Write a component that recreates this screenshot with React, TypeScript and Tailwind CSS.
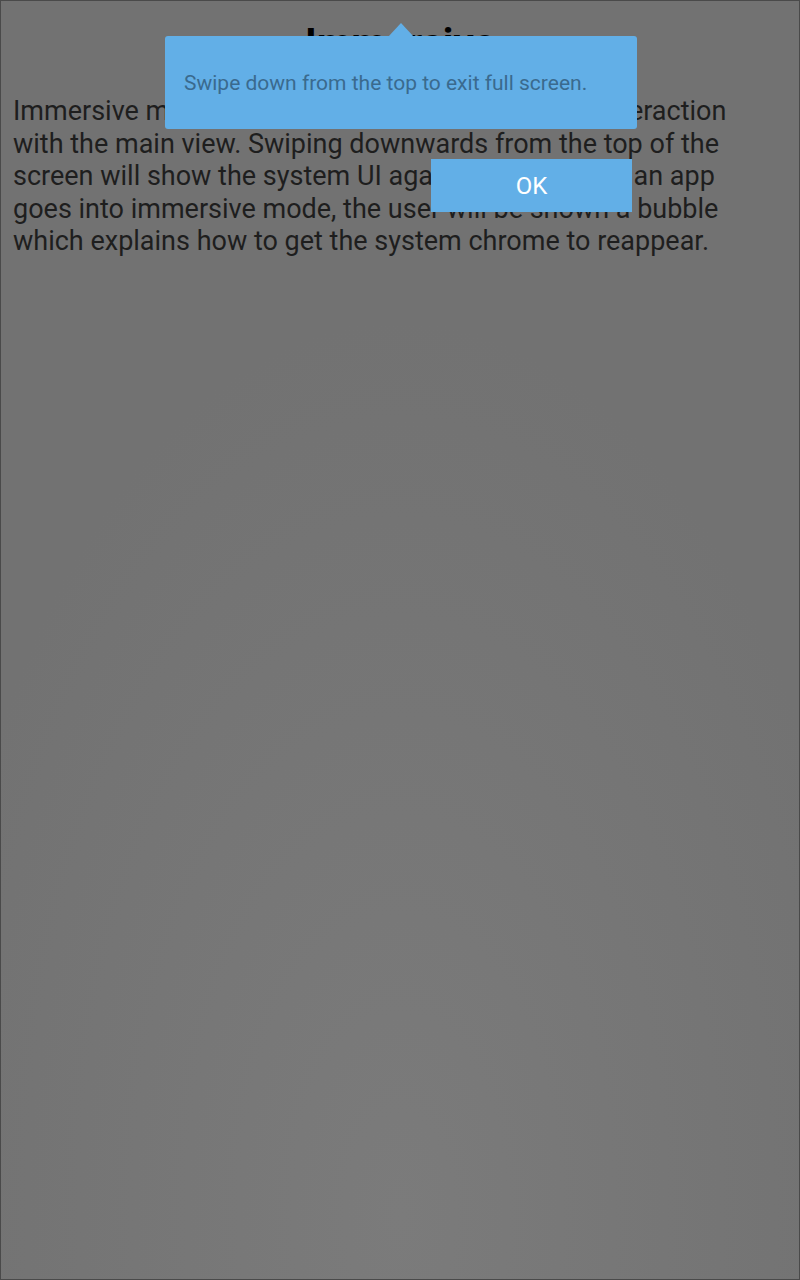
const App = () => {
  return (
    <div
      className="relative w-[800px] h-[1280px] overflow-hidden border border-[#4a4a4a] bg-[radial-gradient(ellipse_60%_70%_at_50%_95%,#7b7b7b,#727272)]"
      style={{ fontFamily: "Roboto, 'Noto Sans', sans-serif" }}
    >
      <h1 className="pt-[23px] text-center text-[40px] leading-[40px] font-bold text-black">
        Immersive
      </h1>
      <p className="mt-[31px] px-[12px] text-[27px] leading-[32.5px] text-[#1e1e1e] whitespace-nowrap">
        Immersive mode hides the system UI and allows interaction
        <br />
        with the main view. Swiping downwards from the top of the
        <br />
        screen will show the system UI again. The first time an app
        <br />
        goes into immersive mode, the user will be shown a bubble
        <br />
        which explains how to get the system chrome to reappear.
      </p>

      {/* bubble */}
      <div className="absolute left-[164px] top-[35px] w-[472px] h-[93px] rounded-[3px] bg-[#62afe7] flex items-center pl-[19px] pt-[3px]">
        <span className="text-[21px] text-[#3a6a8e]">Swipe down from the top to exit full screen.</span>
        <svg className="absolute left-[223px] top-[-13px]" width="26" height="14" viewBox="0 0 26 14">
          <polygon points="0,14 13,0 26,14" fill="#62afe7" />
        </svg>
      </div>

      <div className="absolute left-[430px] top-[158px] w-[201px] h-[53px] bg-[#62afe7] flex items-center justify-center">
        <span className="text-[24px] text-white">OK</span>
      </div>
    </div>
  );
};

export default App;
